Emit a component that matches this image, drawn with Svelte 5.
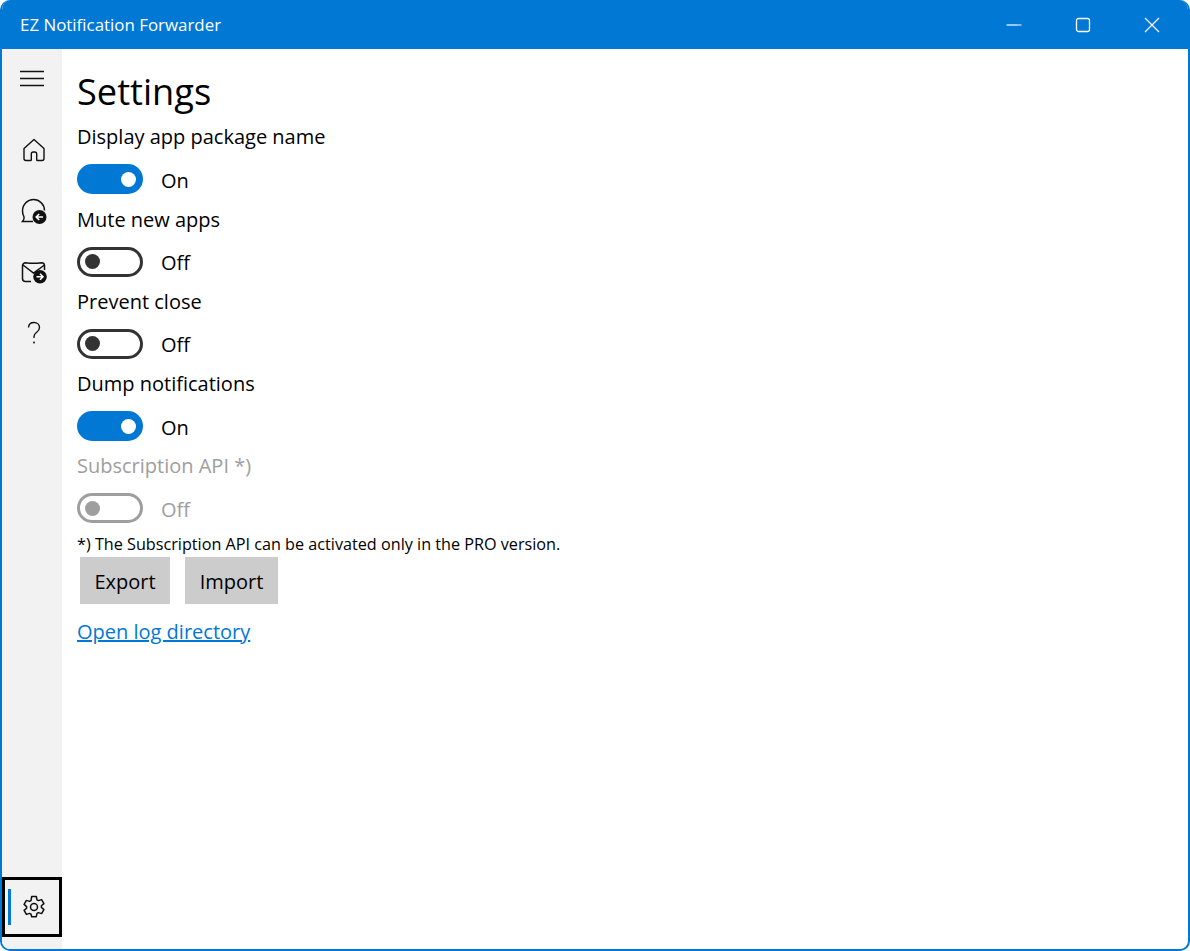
<script>
  const settings = [
    { label: 'Display app package name', on: true },
    { label: 'Mute new apps', on: false },
    { label: 'Prevent close', on: false },
    { label: 'Dump notifications', on: true },
    { label: 'Subscription API *)', on: false, disabled: true }
  ];
</script>

<div class="window">
  <header class="titlebar">
    <span class="title">EZ Notification Forwarder</span>
    <div class="controls">
      <svg width="16" height="16" viewBox="0 0 16 16"><path d="M0.500 8h15" stroke="#fff" stroke-width="1.200" fill="none" /></svg>
      <svg width="16" height="16" viewBox="0 0 16 16"><rect x="1.500" y="1.500" width="13" height="13" rx="2" stroke="#fff" stroke-width="1.300" fill="none" /></svg>
      <svg width="16" height="16" viewBox="0 0 16 16"><path d="M1 1l14 14M15 1L1 15" stroke="#fff" stroke-width="1.200" fill="none" /></svg>
    </div>
  </header>

  <div class="body">
    <nav class="sidebar">
      <div class="menu">
        <svg width="24" height="18" viewBox="0 0 24 18"><path d="M0 1.500h24M0 8.500h24M0 15.500h24" stroke="#111" stroke-width="1.400" fill="none" /></svg>
      </div>
      <div class="navitem">
        <svg width="24" height="24" viewBox="0 0 24 24" fill="none" stroke="#111" stroke-width="1.400" stroke-linejoin="round"><path d="M12 1.500 2 10.500V20.500a2 2 0 0 0 2 2h4.500a.8.8 0 0 0 .8-.8V16a2 2 0 0 1 2-2h1.400a2 2 0 0 1 2 2v5.700a.8.8 0 0 0 .8.8H20a2 2 0 0 0 2-2V10.500z" /></svg>
      </div>
      <div class="navitem">
        <svg width="28" height="28" viewBox="0 0 28 28" fill="none"><path d="M13 24.500H2.500C3.800 23 4.500 21.500 4 20 C3 18 2.500 16 2.500 14 C2.500 7.500 7.500 2.500 13.500 2.500 C19.500 2.500 24.500 7.500 24.500 13.500" stroke="#111" stroke-width="1.500" /><circle cx="19.500" cy="20" r="7" fill="#111" /><path d="M23 20h-6.500M19.200 17 16.200 20l3 3" stroke="#fff" stroke-width="1.600" /></svg>
      </div>
      <div class="navitem">
        <svg width="28" height="28" viewBox="0 0 28 28" fill="none"><path d="M11 23.500H5.500a3 3 0 0 1-3-3V8a3 3 0 0 1 3-3.200C11 5.500 16 5.500 21.500 4.800a3 3 0 0 1 3 3V12M3 7l10.500 8L24.500 7" stroke="#111" stroke-width="1.500" /><circle cx="20" cy="18.700" r="6.800" fill="#111" /><path d="M16.500 18.700h6.500M20 15.700l3 3-3 3" stroke="#fff" stroke-width="1.600" /></svg>
      </div>
      <div class="navitem">
        <svg width="24" height="24" viewBox="0 0 24 24" fill="none" stroke="#111" stroke-width="1.400"><path d="M6.500 6.500C6.700 3.500 9 1.500 12 1.500c3.200 0 5.500 2.200 5.500 5 0 2.200-1.200 3.500-2.800 4.700-1.600 1.200-2.700 2.300-2.700 4.300v1.500" /><circle cx="12" cy="21.500" r="1" fill="#111" stroke="none" /></svg>
      </div>
      <div class="settings">
        <span class="indicator"></span>
        <svg width="24" height="24" viewBox="0 0 24 24" fill="none" stroke="#111" stroke-width="1.500" stroke-linejoin="round"><circle cx="12" cy="12" r="3.500" /><path d="M9.700 1.500h4.600l.7 3.300 1.400.8 3.200-1 2.300 4-2.500 2.200v1.600l2.500 2.200-2.300 4-3.200-1-1.400.8-.7 3.300H9.700L9 19.200l-1.400-.8-3.200 1-2.300-4 2.500-2.200v-1.600L2.100 9.400l2.300-4 3.200 1L9 5.600z" /></svg>
      </div>
    </nav>

    <main class="content">
      <h1>Settings</h1>
      {#each settings as s}
        <section class="setting" class:disabled={s.disabled}>
          <div class="label">{s.label}</div>
          <div class="row">
            <span class="toggle" class:on={s.on}><span class="knob"></span></span>
            <span class="state">{s.on ? 'On' : 'Off'}</span>
          </div>
        </section>
      {/each}
      <p class="note">*) The Subscription API can be activated only in the PRO version.</p>
      <div class="buttons">
        <button>Export</button>
        <button>Import</button>
      </div>
      <a href="#log" class="link">Open log directory</a>
    </main>
  </div>
</div>

<style>
  :global(body) {
    margin: 0;
    background: #fff;
  }

  .window {
    width: 1190px;
    height: 951px;
    box-sizing: border-box;
    border: 2px solid #0078d4;
    border-top: none;
    border-radius: 10px;
    overflow: hidden;
    display: flex;
    flex-direction: column;
    font-family: "Open Sans", "Noto Sans", sans-serif;
    color: #000;
  }

  .titlebar {
    height: 49px;
    margin: 0 -2px;
    flex: none;
    background: #0078d4;
    color: #fff;
    display: flex;
    align-items: center;
    justify-content: space-between;
    padding: 0 30px 0 20px;
  }

  .title {
    font-size: 16.900px;
  }

  .controls {
    display: flex;
    gap: 53px;
  }

  .controls svg {
    display: block;
  }

  .body {
    flex: 1;
    display: flex;
    min-height: 0;
  }

  .sidebar {
    width: 60px;
    flex: none;
    background: #f2f2f2;
    display: flex;
    flex-direction: column;
    align-items: center;
  }

  .menu {
    height: 60px;
    margin-bottom: 10px;
    display: flex;
    align-items: center;
    justify-content: center;
  }

  .menu svg {
    display: block;
  }

  .navitem {
    height: 61px;
    width: 60px;
    padding-left: 4px;
    box-sizing: border-box;
    display: flex;
    align-items: center;
    justify-content: center;
  }

  .settings {
    margin-top: auto;
    margin-bottom: 12px;
    width: 60px;
    height: 60px;
    box-sizing: border-box;
    border: 3px solid #000;
    padding-left: 4px;
    display: flex;
    align-items: center;
    justify-content: center;
    position: relative;
  }

  .indicator {
    position: absolute;
    left: 3px;
    top: 9px;
    width: 3px;
    height: 36px;
    background: #0078d4;
  }

  .content {
    flex: 1;
    padding-left: 15px;
  }

  h1 {
    font-size: 36.200px;
    font-weight: 400;
    line-height: 44px;
    margin: 20.350px 0 2px;
  }

  .setting {
    height: 82.250px;
  }

  .label {
    font-size: 20px;
    line-height: 28px;
    padding-top: 8px;
  }

  .disabled {
    color: #9e9e9e;
  }

  .row {
    display: flex;
    align-items: center;
    gap: 18px;
    margin-top: 13px;
    height: 30px;
  }

  .state {
    font-size: 20px;
    position: relative;
    top: 1px;
  }

  .toggle {
    width: 66px;
    height: 30px;
    box-sizing: border-box;
    border: 3px solid #333;
    border-radius: 15px;
    display: flex;
    align-items: center;
    padding: 0 4px 0 5px;
  }

  .toggle.on {
    background: #0078d4;
    border-color: #0078d4;
    justify-content: flex-end;
  }

  .knob {
    width: 15px;
    height: 15px;
    border-radius: 50%;
    background: #333;
  }

  .on .knob {
    background: #fff;
  }

  .disabled .toggle {
    border-color: #9e9e9e;
  }

  .disabled .knob {
    background: #9e9e9e;
  }

  .note {
    font-size: 16.200px;
    line-height: 22px;
    margin: 6px 0 0;
  }

  .buttons {
    display: flex;
    gap: 15px;
    margin: 2px 0 0 3px;
  }

  button {
    height: 47px;
    width: 90px;
    border: none;
    background: #ccc;
    font: inherit;
    font-size: 20px;
    color: #000;
    padding: 2px 0 0;
  }

  button + button {
    width: 93px;
  }

  .link {
    display: inline-block;
    margin-top: 14px;
    font-size: 20px;
    line-height: 28px;
    color: #0078d4;
  }
</style>
